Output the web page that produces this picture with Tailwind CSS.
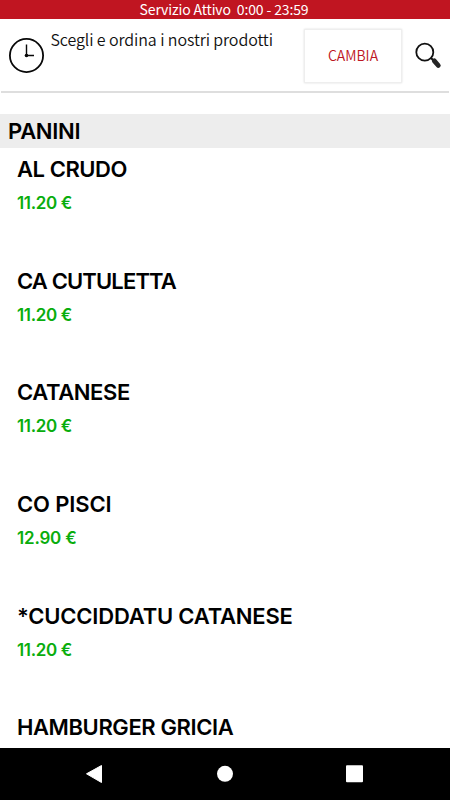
<!DOCTYPE html>
<html lang="it">
<head>
<meta charset="utf-8">
<title>Menu</title>
<script src="https://cdn.jsdelivr.net/npm/@tailwindcss/browser@4"></script>
</head>
<body class="w-[450px] h-[800px] overflow-hidden bg-white flex flex-col font-['Noto_Sans_CJK_JP',sans-serif] text-black">
<div class="h-[19px] shrink-0 bg-[#c01521] text-white text-center text-[14px] leading-[19px] whitespace-pre pr-[2px]"><span class="tracking-[-0.14px]">Servizio Attivo  0:00 - 23:59</span></div>
<header class="h-[74px] mx-px shrink-0 flex border-b-2 border-[#dedede]">
<svg class="w-[36px] h-[36px] mt-[18px] ml-[7px] shrink-0" viewBox="0 0 36 36" fill="none" stroke="#080808"><circle cx="18.5" cy="18.5" r="16.6" stroke-width="1.8"/><path d="M18.5 7.5V18.5H26" stroke-width="1.4"/><circle cx="18.5" cy="18.5" r="1.8" fill="#080808" stroke="none"/></svg>
<p class="ml-[6.5px] mt-[8px] w-[253.5px] shrink-0 text-[16px] font-[350] leading-6 text-[#111] whitespace-nowrap tracking-[-0.1px]">Scegli e ordina i nostri prodotti</p>
<button class="mt-[10px] w-[98px] h-[54px] shrink-0 border border-[#eeeeee] shadow-[0_0_2px_#ddd] text-[14px] font-[350] text-[#bd1622] leading-[50px] pb-[3px]">CAMBIA</button>
<svg class="ml-[12px] mt-[22px] w-[30px] h-[30px] shrink-0" viewBox="0 0 30 30" fill="none"><circle cx="10.8" cy="11.2" r="8.5" stroke="#111" stroke-width="1.8"/><path d="M17 17L20 20" stroke="#111" stroke-width="2"/><path d="M20.3 19.9L24.3 24.5" stroke="#252525" stroke-width="4.8" stroke-linecap="round"/></svg>
</header>
<main class="h-[655px] shrink-0 pt-[21px] overflow-hidden font-['Inter',sans-serif] font-[560] text-[22px] leading-[34px] whitespace-nowrap">
<h1 class="bg-[#ededed] h-[34px] pl-[8px] tracking-[-0.3px]">PANINI</h1>
<ul class="pl-[17px]">
<li class="h-[111.7px] pt-[4px]"><h2 class="tracking-[-0.45px]">AL CRUDO</h2><p class="text-[17px] text-[#09ad0d] tracking-[-0.35px]">11.20 €</p></li>
<li class="h-[111.7px] pt-[4px]"><h2 class="tracking-[-0.85px]">CA CUTULETTA</h2><p class="text-[17px] text-[#09ad0d] tracking-[-0.35px]">11.20 €</p></li>
<li class="h-[111.7px] pt-[4px]"><h2 class="tracking-[-0.4px]">CATANESE</h2><p class="text-[17px] text-[#09ad0d] tracking-[-0.35px]">11.20 €</p></li>
<li class="h-[111.7px] pt-[4px]"><h2 class="tracking-[-0.12px]">CO PISCI</h2><p class="text-[17px] text-[#09ad0d] tracking-[-0.2px]">12.90 €</p></li>
<li class="h-[111.7px] pt-[4px]"><h2 class="tracking-[-0.2px]">*CUCCIDDATU CATANESE</h2><p class="text-[17px] text-[#09ad0d] tracking-[-0.35px]">11.20 €</p></li>
<li class="h-[111.7px] pt-[4px]"><h2 class="tracking-[-0.4px]">HAMBURGER GRICIA</h2></li>
</ul>
</main>
<nav class="h-[52px] shrink-0 bg-black">
<svg class="w-[450px] h-[52px]" viewBox="0 0 450 52" fill="#fff"><path d="M86.5 25.8L101.5 17.5V34.5Z" stroke="#fff" stroke-width="1" stroke-linejoin="round"/><circle cx="225" cy="25.8" r="8"/><rect x="346" y="17.3" width="17" height="17" rx="1"/></svg>
</nav>
</body>
</html>
